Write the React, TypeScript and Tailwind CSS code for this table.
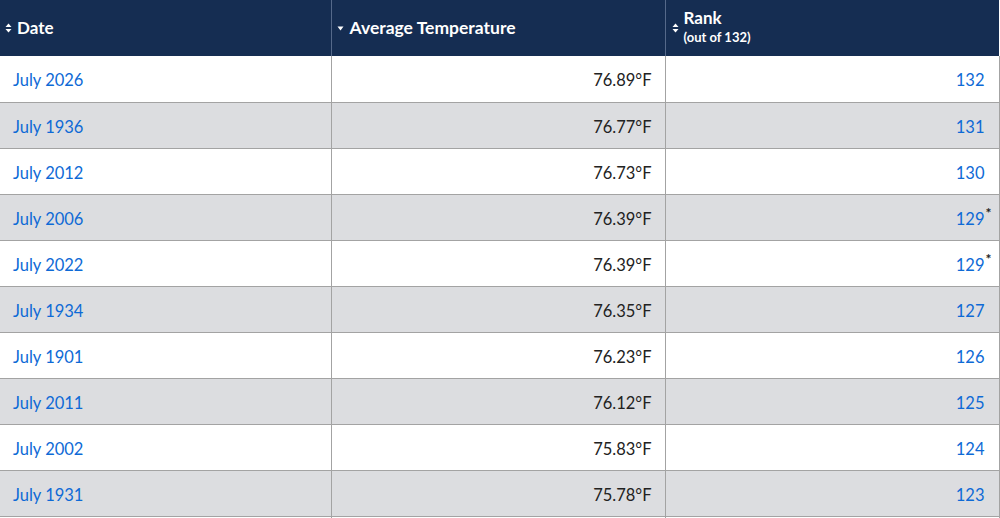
import React from 'react';

const rows = [
  { date: 'July 2026', temp: '76.89°F', rank: '132' },
  { date: 'July 1936', temp: '76.77°F', rank: '131' },
  { date: 'July 2012', temp: '76.73°F', rank: '130' },
  { date: 'July 2006', temp: '76.39°F', rank: '129', tie: true },
  { date: 'July 2022', temp: '76.39°F', rank: '129', tie: true },
  { date: 'July 1934', temp: '76.35°F', rank: '127' },
  { date: 'July 1901', temp: '76.23°F', rank: '126' },
  { date: 'July 2011', temp: '76.12°F', rank: '125' },
  { date: 'July 2002', temp: '75.83°F', rank: '124' },
  { date: 'July 1931', temp: '75.78°F', rank: '123' },
];

const SortBoth = () => (
  <svg width="7" height="10" viewBox="0 0 7 10" className="inline-block shrink-0">
    <path d="M3.5 0.5 L6.5 4 L0.5 4 Z" fill="white" />
    <path d="M0.5 6 L6.5 6 L3.5 9.5 Z" fill="white" />
  </svg>
);

const SortDown = () => (
  <svg width="7" height="5" viewBox="0 0 7 5" className="inline-block shrink-0">
    <path d="M0.5 0.5 L6.5 0.5 L3.5 4.5 Z" fill="white" />
  </svg>
);

export default function App() {
  return (
    <div className="w-[1000px] h-[518px] overflow-hidden bg-white" style={{ fontFamily: '"Source Sans Pro", Lato, "Noto Sans", sans-serif' }}>
      <table className="w-[999px] border-collapse table-fixed">
        <colgroup>
          <col className="w-[331px]" />
          <col className="w-[334px]" />
          <col className="w-[334px]" />
        </colgroup>
        <thead>
          <tr className="bg-[#152d52] text-white h-[56px]">
            <th className="text-left font-bold text-[17px] px-[5px] border-r border-[#55698a] align-middle">
              <span className="flex items-center gap-[5px]"><SortBoth /> Date</span>
            </th>
            <th className="text-left font-bold text-[17.5px] px-[5px] border-r border-[#55698a] align-middle">
              <span className="flex items-center gap-[6px]"><SortDown /> Average Temperature</span>
            </th>
            <th className="text-left font-bold px-[6px] align-middle">
              <div className="flex items-center gap-[5px]">
                <SortBoth />
                <div className="flex flex-col leading-tight -mt-[4px]">
                  <span className="text-[17px]">Rank</span>
                  <span className="text-[13px] mt-[1px]">(out of 132)</span>
                </div>
              </div>
            </th>
          </tr>
        </thead>
        <tbody>
          {rows.map((r, i) => (
            <tr key={r.date} className={`h-[46px] border-b border-[#a3a3a3] ${i % 2 === 1 ? 'bg-[#dcdde0]' : 'bg-white'}`}>
              <td className="px-[13px] pt-[4px] text-[16.5px] text-[#0e6ad6] border-r border-[#a3a3a3]">{r.date}</td>
              <td className="px-[13px] pt-[4px] text-[16.5px] text-[#222] text-right border-r border-[#a3a3a3]">{r.temp}</td>
              <td className="px-[14px] pt-[4px] text-[16.5px] text-[#0e6ad6] text-right border-r border-[#a3a3a3]">
                <span className="relative">
                  {r.rank}
                  {r.tie && <span className="absolute -right-[7px] -top-[3px] text-[14px] leading-none font-bold text-[#222]">*</span>}
                </span>
              </td>
            </tr>
          ))}
          <tr className="h-[46px] bg-white">
            <td className="border-r border-[#a3a3a3]"></td>
            <td className="border-r border-[#a3a3a3]"></td>
            <td className="border-r border-[#a3a3a3]"></td>
          </tr>
        </tbody>
      </table>
    </div>
  );
}
